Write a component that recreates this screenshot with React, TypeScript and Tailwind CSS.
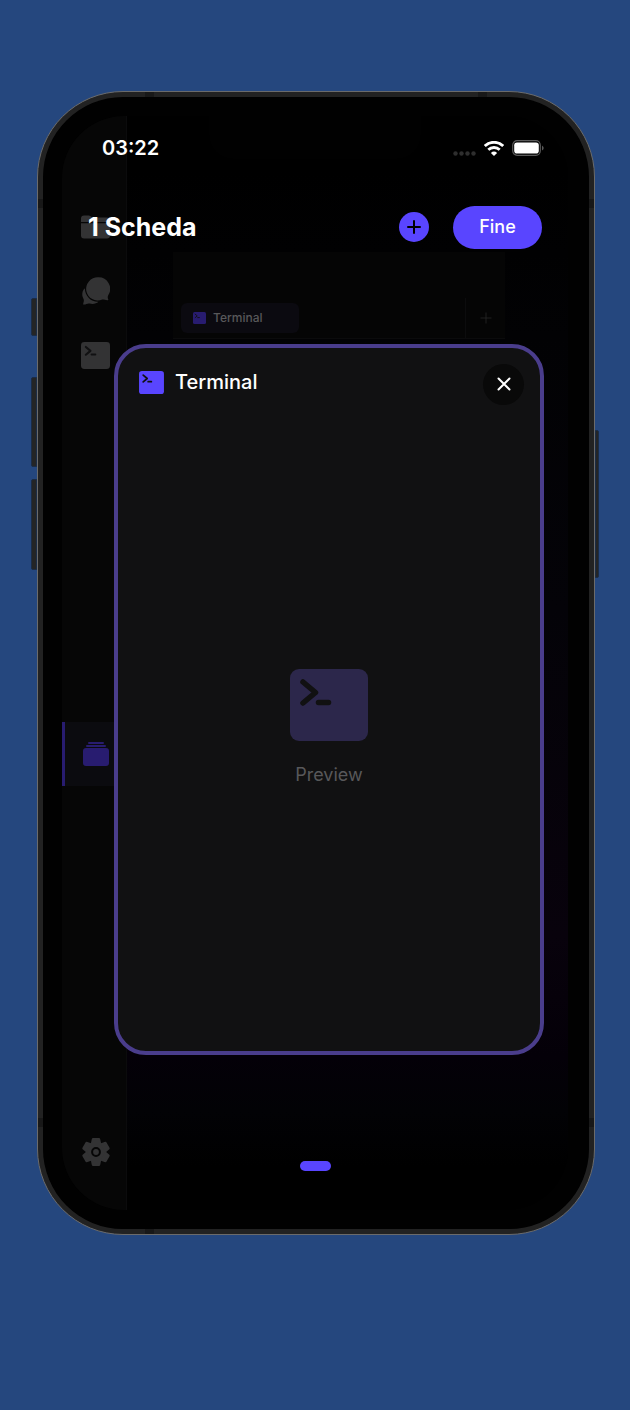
import React from 'react';

type IconProps = { className?: string };

function TerminalIcon({ className }: IconProps) {
  return (
    <svg viewBox="0 0 78 72" className={className} aria-hidden="true">
      <rect width="78" height="72" rx="9" fill="currentColor" />
      <path d="M13 13 25.5 23.500 13 34" fill="none" stroke="#111112" strokeWidth="5.500" strokeLinecap="round" strokeLinejoin="round" />
      <path d="M28.500 33.500h10" fill="none" stroke="#111112" strokeWidth="5.500" strokeLinecap="round" />
    </svg>
  );
}

function FolderIcon({ className }: IconProps) {
  return (
    <svg viewBox="0 0 29 24" className={className} fill="currentColor" aria-hidden="true">
      <path d="M0 7V3.400Q0 .5 3 .5h4.600q1.200 0 2.100.8l.9.700q.8.600 1.900.6H26q3 0 3 3V7z" />
      <path d="M0 8.300h29v12.200q0 3-3 3H3q-3 0-3-3z" />
    </svg>
  );
}

function ChatIcon({ className }: IconProps) {
  return (
    <svg viewBox="0 0 28 28" className={className} fill="currentColor" aria-hidden="true">
      <path d="M16 .3a11.600 11.600 0 1 0 4.200 22.300c1.400-.4 3.400.8 5.600.6.500 0 .7-.4.500-.8-.8-1.500-.7-3-.1-4.100A11.600 11.600 0 0 0 16 .3z" />
      <path d="M2.800 11.200C.8 13.300 0 15.600.3 18.300c.2 1.600 1 3 1.500 4.400.4 1.500-.6 3-.6 4.300 0 .6.400.7.900.6 2-.2 3.600-1.600 5.400-1.100 3.200.8 6.700.4 9-1.700C9.300 25.200 3.200 19.500 2.800 11.200z" />
    </svg>
  );
}

function StackIcon({ className }: IconProps) {
  return (
    <svg viewBox="0 0 26 24" className={className} fill="currentColor" aria-hidden="true">
      <rect x="5" width="16" height="2" rx="1" />
      <rect x="3" y="3" width="20" height="2" rx="1" />
      <rect x="0" y="6" width="26" height="18" rx="3" />
    </svg>
  );
}

function GearIcon({ className }: IconProps) {
  const teeth = [0, 60, 120, 180, 240, 300];
  return (
    <svg viewBox="-14 -14 28 28" className={className} fill="currentColor" aria-hidden="true">
      <circle r="10.200" />
      {teeth.map((angle) => (
        <path key={angle} transform={`rotate(${angle})`} d="M-5.200-8-4.200-13Q-3.900-13.900-3-13.900H3Q3.900-13.900 4.200-13L5.200-8z" />
      ))}
      <circle r="3.900" fill="none" stroke="#060606" strokeWidth="2" />
    </svg>
  );
}

function PlusIcon({ className }: IconProps) {
  return (
    <svg viewBox="0 0 14 14" className={className} fill="none" stroke="currentColor" strokeLinecap="round" aria-hidden="true">
      <path d="M7 1v12M1 7h12" />
    </svg>
  );
}

function CloseIcon({ className }: IconProps) {
  return (
    <svg viewBox="0 0 14 14" className={className} fill="none" stroke="currentColor" strokeWidth="2" strokeLinecap="round" aria-hidden="true">
      <path d="M1.500 1.500l11 11M12.500 1.500l-11 11" />
    </svg>
  );
}

function WifiIcon({ className }: IconProps) {
  return (
    <svg viewBox="0 0 20 15" className={className} fill="none" stroke="currentColor" strokeWidth="2.800" aria-hidden="true">
      <path d="M.8 5a13.200 13.200 0 0 1 18.400 0" />
      <path d="M4.300 8.800a8.200 8.200 0 0 1 11.400 0" />
      <path d="M10 15 6.900 11.900a4.500 4.500 0 0 1 6.200 0z" fill="currentColor" stroke="none" />
    </svg>
  );
}

function BatteryIcon({ className }: IconProps) {
  return (
    <svg viewBox="0 0 32 16" className={className} aria-hidden="true">
      <rect x=".7" y=".7" width="27.600" height="14.600" rx="4.500" fill="none" stroke="#5a5a5a" strokeWidth="1.200" />
      <rect x="2.200" y="2.500" width="24.600" height="11" rx="2.800" fill="#fff" />
      <path d="M30 5.500q1.700 1 1.700 2.500T30 10.500z" fill="#5a5a5a" />
    </svg>
  );
}

function SignalDots({ className }: IconProps) {
  return (
    <svg viewBox="0 0 23 5" className={className} fill="#2e2e2e" aria-hidden="true">
      <circle cx="2.500" cy="2.500" r="2.200" />
      <circle cx="8.500" cy="2.500" r="2.200" />
      <circle cx="14.500" cy="2.500" r="2.200" />
      <circle cx="20.500" cy="2.500" r="2.200" />
    </svg>
  );
}

function Sidebar() {
  const item = 'flex h-16 w-full items-center justify-center pl-[3px]';
  return (
    <nav aria-label="Sezioni" className="flex w-[65px] shrink-0 flex-col justify-between border-r border-[#0b0b0c] bg-[#060606] pt-[79px] pb-[26px] text-[#333334]">
      <div>
        <button aria-label="File" className={item}><FolderIcon className="h-6 w-[29px]" /></button>
        <button aria-label="Chat" className={item}><ChatIcon className="h-7 w-7" /></button>
        <button aria-label="Terminale" className={item}><TerminalIcon className="h-[27px] w-[29px]" /></button>
      </div>
      <button aria-label="Schede" className="flex h-16 w-full items-center justify-center border-l-[3px] border-[#281c70] bg-[#0b0b0f] text-[#281c70]">
        <StackIcon className="h-6 w-[26px]" />
      </button>
      <button aria-label="Impostazioni" className={item}><GearIcon className="h-7 w-7" /></button>
    </nav>
  );
}

function Workspace() {
  return (
    <div className="flex flex-1 flex-col bg-[linear-gradient(to_bottom,#000000_5%,#020204_20%,#040308_45%,#08020c_75%,#040008_86%,#020205_91%,#000000_96%)] pt-[136px] pr-[63px] pl-[46px]">
      <section className="flex flex-1 flex-col">
        <div className="flex items-end justify-between border-b border-[#0b0b0c] bg-[#050505] pt-[46px] pl-2">
          <button className="mb-[5px] flex h-[30px] w-[118px] items-center gap-[7px] rounded-md bg-[#0b0a10] pl-3 text-[12px] font-medium text-[#58585a]">
            <TerminalIcon className="h-3 w-[13px] text-[#281c70]" />
            Terminal
          </button>
          <button aria-label="Nuovo terminale" className="flex h-10 w-10 items-center justify-center border-l border-[#0c0c0d] text-[#262627]">
            <PlusIcon className="h-3 w-3" />
          </button>
        </div>
      </section>
    </div>
  );
}

function TabSwitcher() {
  return (
    <div className="z-10 flex flex-col text-white [grid-area:1/1]">
      <div className="flex h-16 items-center justify-between pr-6 pl-10">
        <time className="text-[20px] leading-6 font-semibold">03:22</time>
        <div className="flex items-center gap-2">
          <SignalDots className="mt-[10px] h-[5px] w-[23px]" />
          <WifiIcon className="h-[15px] w-5" />
          <BatteryIcon className="h-4 w-8" />
        </div>
      </div>
      <header className="flex h-[94px] items-center justify-between px-[26px]">
        <h1 className="text-[25px] leading-8 font-bold">1 Scheda</h1>
        <div className="flex items-center gap-6">
          <button aria-label="Nuova scheda" className="flex h-[30px] w-[30px] items-center justify-center rounded-full bg-[#5945ff] text-black">
            <PlusIcon className="h-[14px] w-[14px] stroke-2" />
          </button>
          <button className="h-[43px] w-[89px] rounded-full bg-[#5945ff] text-[18px] leading-6 font-medium">Fine</button>
        </div>
      </header>
      <main className="mt-[70px] mr-6 ml-[52px] flex flex-1 flex-col rounded-[32px] border-4 border-[#4a3d8c] bg-[#111112]">
        <div className="flex h-[68px] items-center justify-between pr-4 pl-[21px]">
          <div className="flex items-center gap-[11px]">
            <TerminalIcon className="h-[23px] w-[25px] text-[#5945ff]" />
            <h2 className="text-[20px] leading-6 font-medium">Terminal</h2>
          </div>
          <button aria-label="Chiudi scheda" className="mt-1 flex h-[41px] w-[41px] items-center justify-center rounded-full bg-[#090909]">
            <CloseIcon className="h-[14px] w-[14px]" />
          </button>
        </div>
        <div className="flex flex-1 flex-col items-center justify-center gap-[22px] pb-3 text-[#58585a]">
          <TerminalIcon className="h-[72px] w-[78px] text-[#2c274b]" />
          <p className="text-[18px] leading-6">Preview</p>
        </div>
      </main>
      <footer className="flex h-[155px] justify-center pt-[106px]">
        <span className="h-[10px] w-[31px] rounded-full bg-[#5945ff]" />
      </footer>
    </div>
  );
}

function PhoneHardware() {
  return (
    <div aria-hidden="true">
      <i className="absolute top-[206px] -left-[7px] h-[38px] w-[6px] rounded-l-xs border border-[#1b2c46] bg-[#242526]" />
      <i className="absolute top-[285px] -left-[7px] h-[90px] w-[6px] rounded-l-xs border border-[#1b2c46] bg-[#242526]" />
      <i className="absolute top-[387px] -left-[7px] h-[91px] w-[6px] rounded-l-xs border border-[#1b2c46] bg-[#242526]" />
      <i className="absolute top-[338px] -right-[5px] h-[148px] w-1 rounded-r-xs border border-[#1b2c46] bg-[#242526]" />
      <i className="absolute top-0 left-[107px] h-[5px] w-[9px] bg-[#181818]" />
      <i className="absolute top-0 right-[107px] h-[5px] w-[9px] bg-[#181818]" />
      <i className="absolute bottom-0 left-[107px] h-[5px] w-[9px] bg-[#181818]" />
      <i className="absolute top-[107px] left-0 h-[9px] w-[5px] bg-[#181818]" />
      <i className="absolute top-[107px] right-0 h-[9px] w-[5px] bg-[#181818]" />
      <i className="absolute bottom-[107px] left-0 h-[9px] w-[5px] bg-[#181818]" />
      <i className="absolute right-0 bottom-[107px] h-[9px] w-[5px] bg-[#181818]" />
    </div>
  );
}

export default function App() {
  return (
    <div className="flex min-h-screen justify-center bg-[#25477e] pt-[91px] pr-[35px] pb-[175px] pl-[37px] font-[Inter,sans-serif]">
      <div className="relative flex w-full max-w-[640px] rounded-[86px] border border-[#6b6b6b] bg-[#222222]">
        <PhoneHardware />
        <div className="m-[5px] flex flex-1 rounded-[80px] bg-[#010101] py-[19px] pr-[21px] pl-[19px]">
          <div className="relative grid flex-1 overflow-hidden rounded-[62px] bg-black">
            <div className="flex [grid-area:1/1]">
              <Sidebar />
              <Workspace />
            </div>
            <div className="absolute top-0 left-1/2 h-[43px] w-[212px] -translate-x-1/2 rounded-b-3xl bg-[#010101]" />
            <TabSwitcher />
          </div>
        </div>
      </div>
    </div>
  );
}
